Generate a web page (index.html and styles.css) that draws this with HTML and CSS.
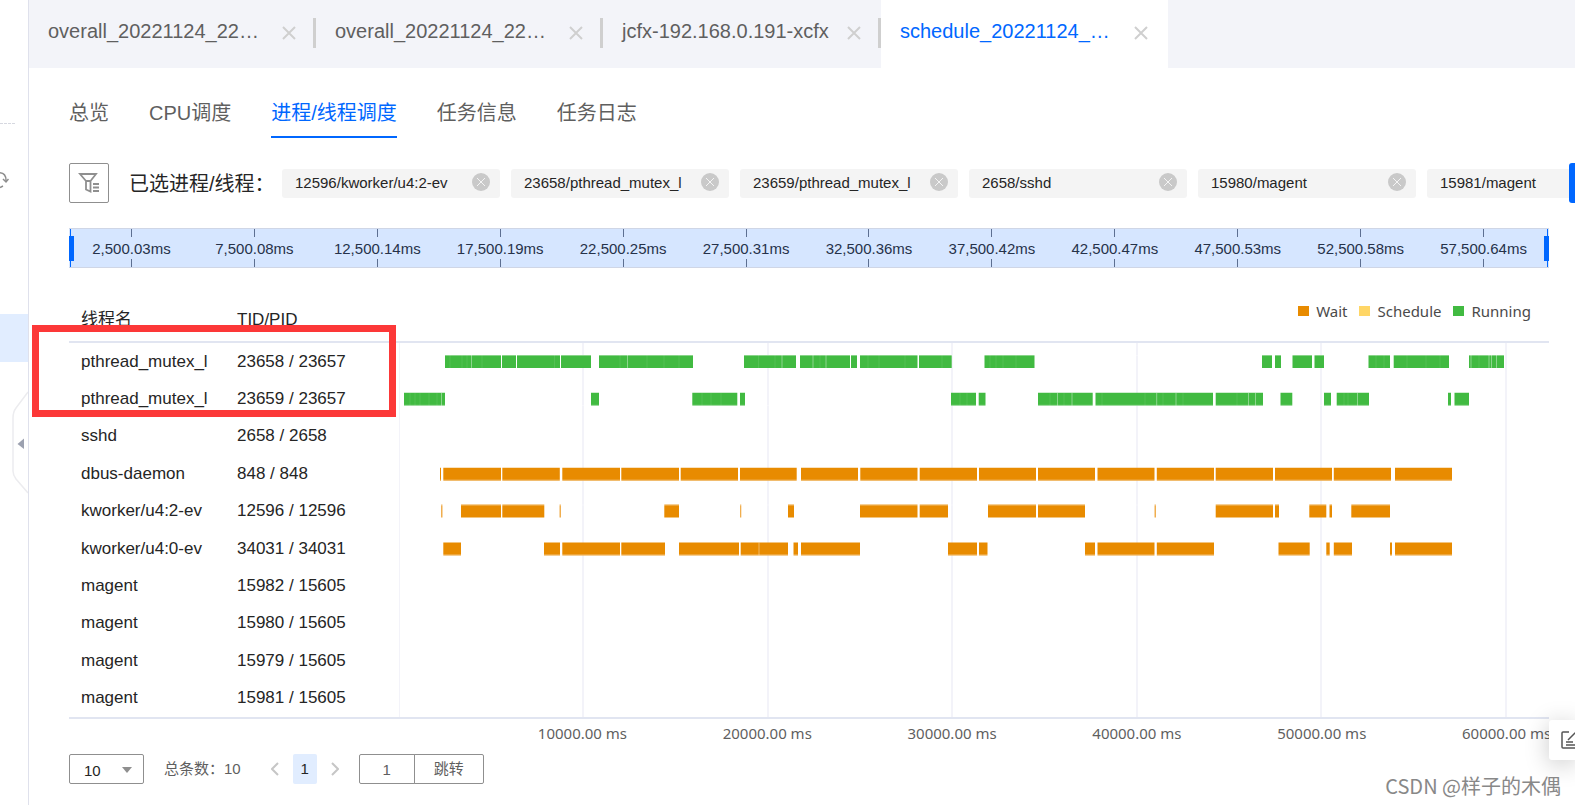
FILE: index.html
```html
<!DOCTYPE html>
<html lang="zh-CN">
<head>
<meta charset="utf-8">
<title>进程/线程调度</title>
<link rel="stylesheet" href="styles.css">
</head>
<body>
<svg class="defs" aria-hidden="true">
  <symbol id="cross" viewBox="0 0 14 14"><path d="M1 1 13 13M13 1 1 13" fill="none" stroke="#cfcfcf" stroke-width="2"/></symbol>
  <symbol id="clear" viewBox="0 0 18 18"><circle cx="9" cy="9" r="9" fill="#c9c9c9"/><path d="M5 5 13 13M13 5 5 13" fill="none" stroke="#f4f4f4" stroke-width="1"/></symbol>
</svg>
<div class="app">
  <aside class="side">
    <div class="side-rule"></div>
    <svg class="side-refresh" width="9" height="18" viewBox="0 0 9 18" fill="none" stroke="#8d8d8d" stroke-width="1.5"><path d="M0 1.8C4 2 6 5 6 9.500M3 8 6 11 8.500 8M0 16.500 3 15"/></svg>
    <div class="side-current"></div>
    <button class="side-toggle" aria-label="收起">
      <svg width="16" height="110" viewBox="0 0 16 110"><path d="M16 1 4 17Q1 21 1 27V80Q1 84 4 88L16 102" fill="#fff" stroke="#ececef" stroke-width="1.500"/><path d="M12 47.500V58L5.500 53Z" fill="#9ca1b0"/></svg>
    </button>
  </aside>
  <main class="main">
    <nav class="tabs">
      <div class="tab"><a href="#">overall_20221124_22…</a><button aria-label="关闭"><svg><use href="#cross"/></svg></button></div>
      <div class="tab"><a href="#">overall_20221124_22…</a><button aria-label="关闭"><svg><use href="#cross"/></svg></button></div>
      <div class="tab tab-short"><a href="#">jcfx-192.168.0.191-xcfx</a><button aria-label="关闭"><svg><use href="#cross"/></svg></button></div>
      <div class="tab tab-active"><a href="#">schedule_20221124_…</a><button aria-label="关闭"><svg><use href="#cross"/></svg></button></div>
    </nav>
    <div class="content">
      <nav class="views">
        <a href="#">总览</a><a href="#">CPU调度</a><a href="#" class="on">进程/线程调度</a><a href="#">任务信息</a><a href="#">任务日志</a>
      </nav>
      <div class="filter">
        <button class="filter-btn" aria-label="筛选"><svg width="24" height="24" viewBox="0 0 24 24" fill="none" stroke="#8f8f8f" stroke-width="1.800"><path d="M3 3H19L13.500 10V20.500L9 18.500V10ZM9 10H13.500"/><path d="M16 13H22M16 16.500H22M16 20H22"/></svg></button>
        <span class="filter-label">已选进程/线程：</span>
        <div class="chips">
          <span class="chip">12596/kworker/u4:2-ev<button aria-label="移除"><svg><use href="#clear"/></svg></button></span>
          <span class="chip">23658/pthread_mutex_l<button aria-label="移除"><svg><use href="#clear"/></svg></button></span>
          <span class="chip">23659/pthread_mutex_l<button aria-label="移除"><svg><use href="#clear"/></svg></button></span>
          <span class="chip">2658/sshd<button aria-label="移除"><svg><use href="#clear"/></svg></button></span>
          <span class="chip">15980/magent<button aria-label="移除"><svg><use href="#clear"/></svg></button></span>
          <span class="chip">15981/magent<button aria-label="移除"><svg><use href="#clear"/></svg></button></span>
        </div>
        <button class="primary" aria-label="确定"></button>
      </div>
      <div class="range">
        <span>2,500.03ms</span><span>7,500.08ms</span><span>12,500.14ms</span><span>17,500.19ms</span><span>22,500.25ms</span><span>27,500.31ms</span><span>32,500.36ms</span><span>37,500.42ms</span><span>42,500.47ms</span><span>47,500.53ms</span><span>52,500.58ms</span><span>57,500.64ms</span>
        <i class="handle handle-start"></i><i class="handle handle-end"></i>
      </div>
      <section class="board">
        <table class="threads">
          <thead><tr><th>线程名</th><th>TID/PID</th></tr></thead>
          <tbody>
            <tr><td>pthread_mutex_l</td><td>23658 / 23657</td></tr>
            <tr><td>pthread_mutex_l</td><td>23659 / 23657</td></tr>
            <tr><td>sshd</td><td>2658 / 2658</td></tr>
            <tr><td>dbus-daemon</td><td>848 / 848</td></tr>
            <tr><td>kworker/u4:2-ev</td><td>12596 / 12596</td></tr>
            <tr><td>kworker/u4:0-ev</td><td>34031 / 34031</td></tr>
            <tr><td>magent</td><td>15982 / 15605</td></tr>
            <tr><td>magent</td><td>15980 / 15605</td></tr>
            <tr><td>magent</td><td>15979 / 15605</td></tr>
            <tr><td>magent</td><td>15981 / 15605</td></tr>
          </tbody>
        </table>
        <div class="chart">
          <div class="legend"><span class="wait">Wait</span><span class="sched">Schedule</span><span class="run">Running</span></div>
          <svg class="plot" viewBox="399 343 1150 375" preserveAspectRatio="none" fill="none">
            <path stroke="#f3f3f9" stroke-width="2" d="M399 343V718M583 343V718M768 343V718M952 343V718M1137 343V718M1321 343V718M1506 343V718"/>
            <g stroke="#41ba41" stroke-width="13">
              <path d="M445 361.500H501M502 361.500H516M517 361.500H560M561 361.500H591M599 361.500H693M744 361.500H796M800 361.500H850M851 361.500H857M860 361.500H917.500M919 361.500H951.700M984.500 361.500H1034.500M1262 361.500H1272M1275 361.500H1281M1292.500 361.500H1312M1314.500 361.500H1324M1368.500 361.500H1390M1393.700 361.500H1449M1469 361.500H1504"/>
              <path d="M404 399.500H445M591 399.500H599M692.300 399.500H737.300M740 399.500H745M951 399.500H976M978.700 399.500H985.500M1038 399.500H1092.700M1095.500 399.500H1213M1215.700 399.500H1263M1280.500 399.500H1292.300M1324 399.500H1331M1336.700 399.500H1369M1448 399.500H1451M1454.500 399.500H1469"/>
            </g>
            <g stroke="#e88b00" stroke-width="13">
              <path d="M440 474.500H441M443.300 474.500H501M502.300 474.500H559.800M562.300 474.500H620M621.300 474.500H679M680.700 474.500H738M740 474.500H796.700M801 474.500H858M860.300 474.500H917.500M919.700 474.500H977M979 474.500H1036M1038 474.500H1095M1097.500 474.500H1154.500M1156.800 474.500H1214M1215.700 474.500H1273M1275 474.500H1332M1333.800 474.500H1391M1395 474.500H1452"/>
              <path d="M461 511.500H501M502.300 511.500H544.300M664.300 511.500H679M788 511.500H794M860 511.500H917.500M919.700 511.500H948M988 511.500H1036M1038 511.500H1085M1215.700 511.500H1273M1275 511.500H1279M1309.300 511.500H1326.300M1329.500 511.500H1332M1351.300 511.500H1390"/>
              <path d="M443.300 549.500H461M544 549.500H560M562.300 549.500H620M621.300 549.500H665M679 549.500H739M740.700 549.500H788M793.500 549.500H798M801 549.500H860M948 549.500H977M979 549.500H987.500M1085 549.500H1095M1097.500 549.500H1154.500M1156.800 549.500H1214M1278.500 549.500H1309.700M1326.300 549.500H1329.700M1333.800 549.500H1352M1390 549.500H1392M1395 549.500H1452"/>
            </g>
            <path stroke="#f0ae4f" stroke-width="13" d="M441 511.500H442.500M559.500 511.500H561M740 511.500H741.300M1154.500 511.500H1156"/>
            <path stroke="#fff" stroke-opacity=".4" d="M471.500 355V368M627.500 355V368M782 355V368M813 355V368M826 355V368M1471 355V368M1489 355V368M1491.500 355V368M1496.500 355V368M1057.500 393V406M1072 393V406M1156.700 393V406M1176 393V406M1248.500 393V406M1255.500 393V406M1357.500 393V406M441.500 393V406M759 543V556"/>
            <path stroke="#fff" stroke-opacity=".1" d="M450 355V368M462 355V368M467 355V368M482 355V368M554.500 355V368M620 355V368M647 355V368M664 355V368M679 355V368M758.500 355V368M775 355V368M820 355V368M868 355V368M879 355V368M905 355V368M942 355V368M990 355V368M996 355V368M1003 355V368M1016 355V368M1376 355V368M1384 355V368M1407 355V368M1426 355V368M1440 355V368M1479 355V368M410 393V406M415 393V406M420 393V406M429 393V406M437 393V406M702 393V406M711 393V406M721 393V406M960 393V406M967 393V406M1050 393V406M1064 393V406M1102 393V406M1145 393V406M1163 393V406M1183 393V406M1237 393V406M1344 393V406M1348 393V406"/>
            <path stroke="#fff" stroke-opacity=".4" d="M443 355.500H1504M404 405.500H1469M440 480.500H1452M443 555.500H1452M441 505.500H1391"/>
          </svg>
          <div class="axis"><span>10000.00 ms</span><span>20000.00 ms</span><span>30000.00 ms</span><span>40000.00 ms</span><span>50000.00 ms</span><span>60000.00 ms</span></div>
        </div>
      </section>
      <footer class="pager">
        <div class="size"><select aria-label="每页条数"><option>10</option></select><svg width="10" height="6" viewBox="0 0 10 6"><path d="M0 0H10L5 6Z" fill="#8f8f8f"/></svg></div>
        <span class="total">总条数：10</span>
        <div class="pages">
          <button aria-label="上一页"><svg width="8" height="14" viewBox="0 0 8 14"><path d="M7 1 1 7 7 13" fill="none" stroke="#c6c6c6" stroke-width="2"/></svg></button>
          <button class="page-on">1</button>
          <button aria-label="下一页"><svg width="8" height="14" viewBox="0 0 8 14"><path d="M1 1 7 7 1 13" fill="none" stroke="#c6c6c6" stroke-width="2"/></svg></button>
        </div>
        <div class="jump"><input value="1" aria-label="页码"><button>跳转</button></div>
      </footer>
    </div>
  </main>
  <div class="mark"></div>
  <button class="feedback" aria-label="反馈"><svg width="20" height="20" viewBox="0 0 20 20" fill="none" stroke="#555" stroke-width="1.500"><path d="M8 2H2Q1 2 1 3V17Q1 18 2 18H18M7 10 16 1M5 12H12M5 15H14"/></svg></button>
  <div class="watermark">CSDN @样子的木偶</div>
</div>
</body>
</html>
```
FILE: styles.css
```css
* { box-sizing: border-box; }
body {
  margin: 0;
  background: #fff;
  color: #252525;
  font-family: "Liberation Sans", "Noto Sans CJK SC", sans-serif;
  font-size: 15px;
}
a { color: inherit; text-decoration: none; }
button {
  padding: 0;
  border: 0;
  background: none;
  color: inherit;
  font: inherit;
}
svg { display: block; }
.defs { position: absolute; width: 0; height: 0; }
.app {
  position: relative;
  display: flex;
  min-height: 100vh;
  overflow: hidden;
}

.side {
  position: relative;
  flex: none;
  width: 29px;
  border-right: 1px solid #dfe1ec;
}
.side-rule { width: 15px; margin-top: 123px; border-top: 1px dashed #d6d8e0; }
.side-refresh { margin-top: 47px; }
.side-current { height: 48px; margin-top: 125px; background: #e1edff; }
.side-toggle { position: absolute; top: 391px; right: 0; }

.main { flex: 1; min-width: 0; }
.tabs { display: flex; height: 68px; background: #f3f4f9; }
.tab {
  position: relative;
  display: flex;
  align-items: center;
  height: 65px;
  padding: 0 20px 0 19px;
  color: #5f5f5f;
  font-size: 20px;
}
.tab a { width: 216px; margin-right: 18px; padding-bottom: 3px; line-height: 62px; white-space: nowrap; }
.tab-short a { width: 207px; }
.tab button svg { width: 14px; height: 14px; }
.tab::after {
  content: "";
  position: absolute;
  top: 18px;
  right: 0;
  width: 3px;
  height: 30px;
  background: #cfcfcf;
}
.tab-active { height: 68px; padding-bottom: 3px; background: #fff; color: #0067ff; }
.tab-active::after { display: none; }

.content { padding: 26px 26px 0 40px; }
.views { display: flex; gap: 40px; color: #5f5f5f; font-size: 20px; line-height: 38px; }
.views a { height: 44px; }
.views .on { border-bottom: 2px solid #0067ff; color: #0067ff; }

.filter { display: flex; align-items: center; height: 40px; margin: 25px -26px 0 0; }
.filter-btn {
  display: grid;
  flex: none;
  place-items: center;
  width: 40px;
  height: 40px;
  border: 1px solid #8f8f8f;
  border-radius: 2px;
}
.filter-label { flex: none; width: 153px; margin-left: 20px; padding-bottom: 2px; font-size: 20px; white-space: nowrap; }
.chips { display: flex; flex: 1; gap: 11px; min-width: 0; overflow: hidden; }
.chip {
  display: flex;
  flex: none;
  align-items: center;
  justify-content: space-between;
  width: 218px;
  height: 29px;
  padding: 0 10px 2px 13px;
  border-radius: 3px;
  background: #f4f4f4;
}
.chip svg { width: 18px; height: 18px; }
.primary { flex: none; width: 6px; height: 40px; border-radius: 3px 0 0 3px; background: #0067ff; }

.range {
  position: relative;
  display: flex;
  height: 40px;
  margin-top: 25px;
  padding: 0 4px 0 1px;
  border: solid #cfd6e6;
  border-width: 1px 0;
  background: #d6e6ff;
}
.range span {
  display: flex;
  flex: 1;
  flex-direction: column;
  align-items: center;
  justify-content: space-between;
  color: #26324a;
  line-height: 17px;
}
.range span::before, .range span::after { content: ""; width: 1px; height: 8px; background: #5d6f91; }
.handle { position: absolute; top: 7px; width: 5px; height: 25px; background: #0067ff; }
.handle::after { content: ""; position: absolute; top: -7px; left: 1px; width: 1px; height: 38px; background: #0067ff; }
.handle-start { left: 0; }
.handle-end { right: 0; }
.handle-end::after { left: 3px; }

.board { display: grid; grid-template-columns: 330px 1fr; margin-top: 25px; }
.threads {
  width: 100%;
  height: 426px;
  border-collapse: separate;
  border-spacing: 0;
  border-bottom: 2px solid #e1e5f1;
  font-size: 17px;
  line-height: 20px;
}
.threads th, .threads td { padding: 0 0 0 12px; text-align: left; font-weight: 400; }
.threads th { height: 50px; padding-top: 5px; border-bottom: 2px solid #e1e5f1; }
.threads th:first-child { width: 156px; }
.chart { min-width: 0; }
.legend {
  display: flex;
  align-items: flex-start;
  justify-content: flex-end;
  gap: 12px;
  height: 50px;
  padding: 6px 18px 0 0;
  border-bottom: 2px solid #e1e5f1;
  color: #4a4a4a;
  font-family: "Noto Sans", sans-serif;
  line-height: 24px;
}
.legend span { display: flex; align-items: center; gap: 7px; }
.legend span::before { content: ""; width: 11px; height: 10px; background: #e88b00; }
.legend .sched::before { background: #ffd666; }
.legend .run::before { background: #41ba41; }
.plot { width: 100%; height: 376px; border-bottom: 2px solid #e1e5f1; }
.axis {
  display: grid;
  grid-template-columns: repeat(6, 1fr);
  margin: 2px -50px 0 91px;
  color: #5f5f5f;
  font-family: "Noto Sans", sans-serif;
  line-height: 24px;
  text-align: center;
}

.pager { display: flex; align-items: center; margin-top: 9px; color: #5f5f5f; line-height: 28px; }
.size { position: relative; }
.size select {
  display: block;
  width: 75px;
  height: 30px;
  padding: 2px 14px 0;
  border: 1px solid #8f8f8f;
  border-radius: 2px;
  background: #fff;
  color: #252525;
  font: inherit;
  appearance: none;
}
.size svg { position: absolute; top: 13px; right: 12px; }
.total { margin-left: 20px; }
.pages { display: flex; gap: 14px; margin-left: 30px; }
.page-on { width: 24px; height: 30px; border-radius: 2px; background: #e1edff; color: #252525; }
.jump { display: flex; margin-left: 20px; }
.jump input {
  width: 56px;
  height: 30px;
  padding: 0;
  border: 1px solid #8f8f8f;
  border-radius: 2px 0 0 2px;
  color: #5f5f5f;
  font: inherit;
  text-align: center;
}
.jump button {
  width: 70px;
  height: 30px;
  margin-left: -1px;
  border: 1px solid #8f8f8f;
  border-radius: 0 2px 2px 0;
}

.mark { position: absolute; top: 325px; left: 32px; width: 364px; height: 92px; border: 7px solid #fc3838; }
.feedback {
  position: absolute;
  right: 0;
  bottom: 45px;
  width: 26px;
  height: 40px;
  padding-left: 12px;
  border-radius: 3px 0 0 3px;
  background: #fff;
  box-shadow: 0 4px 24px rgba(0, 0, 0, .22);
}
.watermark {
  position: absolute;
  right: 14px;
  bottom: 5px;
  color: #888;
  font-family: "Noto Sans CJK SC", sans-serif;
  font-size: 20px;
  line-height: 28px;
}
```
